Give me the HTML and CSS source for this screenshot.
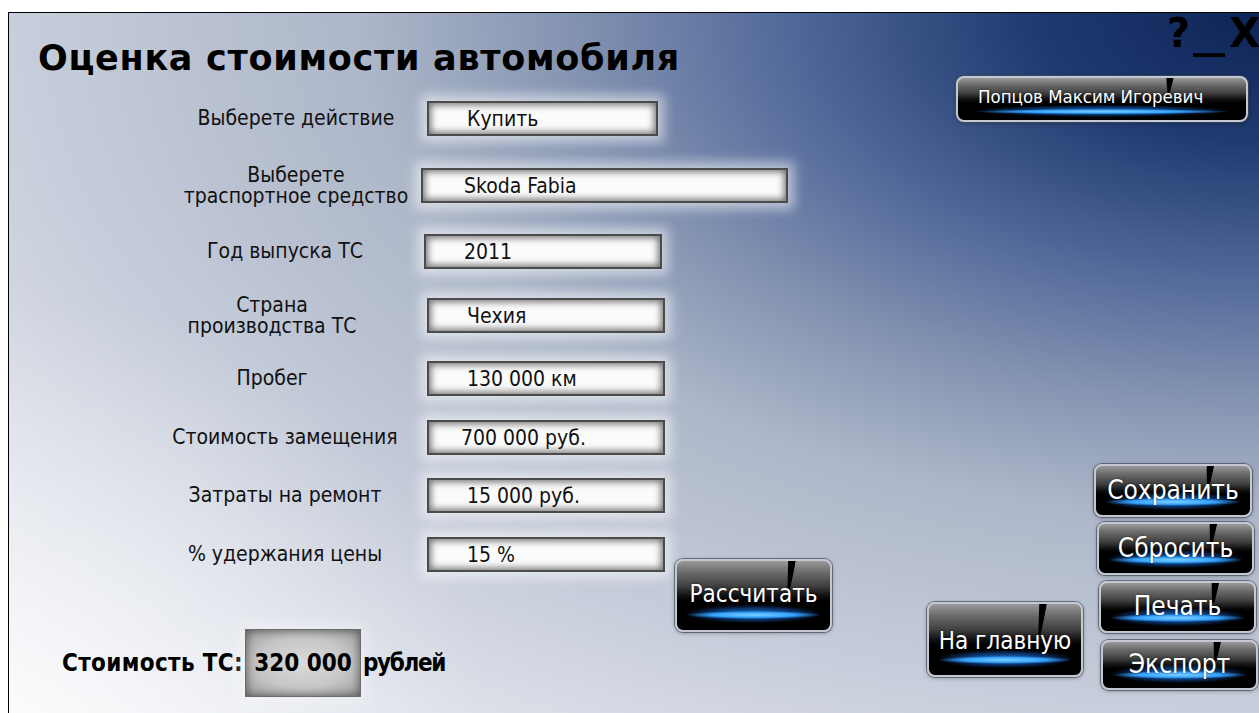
FILE: index.html
```html
<!DOCTYPE html>
<html lang="ru">
<head>
<meta charset="utf-8">
<title>Оценка стоимости автомобиля</title>
<link rel="stylesheet" href="styles.css">
</head>
<body>
<div class="screen">
  <div class="main">
    <h1 class="title">Оценка стоимости автомобиля</h1>

    <div class="form">
      <div class="label label-r">Выберете действие</div>
      <div class="field field-short">Купить</div>
      <div></div>

      <div class="label label-r">Выберете<br>траспортное средство</div>
      <div class="field field-wide">Skoda Fabia</div>
      <div></div>

      <div class="label">Год выпуска ТС</div>
      <div class="field field-year">2011</div>
      <div></div>

      <div class="label label-l">Страна<br>производства ТС</div>
      <div class="field">Чехия</div>
      <div></div>

      <div class="label label-l">Пробег</div>
      <div class="field">130 000 км</div>
      <div></div>

      <div class="label">Стоимость замещения</div>
      <div class="field field-tight">700 000 руб.</div>
      <div></div>

      <div class="label">Затраты на ремонт</div>
      <div class="field">15 000 руб.</div>
      <div></div>

      <div class="label">% удержания цены</div>
      <div class="field">15 %</div>
      <button class="btn btn-calc"><span class="btn-text">Рассчитать</span></button>
    </div>

    <div class="result">
      <span class="result-label">Стоимость ТС:</span>
      <span class="sum-box">320 000</span>
      <span class="result-unit">рублей</span>
    </div>
  </div>

  <div class="side">
    <div class="win-controls">?<span class="wc-min">_</span>X</div>
    <button class="btn btn-user"><span class="btn-text">Попцов Максим Игоревич</span></button>

    <div class="actions">
      <button class="btn btn-home"><span class="btn-text">На главную</span></button>
      <div class="stack">
        <button class="btn btn-side"><span class="btn-text">Сохранить</span></button>
        <button class="btn btn-side"><span class="btn-text">Сбросить</span></button>
        <button class="btn btn-side"><span class="btn-text">Печать</span></button>
        <button class="btn btn-side"><span class="btn-text">Экспорт</span></button>
      </div>
    </div>
  </div>
</div>
</body>
</html>
```

FILE: styles.css
```css
html, body {
  margin: 0;
  padding: 0;
  background: #ffffff;
}

body {
  padding: 12px 0 0 8px;
  font-family: "DejaVu Sans", "Liberation Sans", sans-serif;
}

/* application window */
.screen {
  box-sizing: border-box;
  height: 701px;
  border-top: 1px solid #000;
  border-left: 1px solid #000;
  overflow: hidden;
  display: flex;
  background:
    radial-gradient(ellipse 38% 60% at 0% 100%, rgba(255,255,255,0.55), rgba(255,255,255,0) 100%),
    radial-gradient(ellipse farthest-side at 100% 0%,
      #0f2457 0%, #1f3a70 18%, #52699a 38%, #8695b2 56%,
      #adb7c9 72%, #c8cedb 100%, #e4e7ee 125%, #f6f7f9 141%);
}

/* ---------- left part: title, form, result ---------- */
.main {
  flex: 1;
  display: flex;
  flex-direction: column;
  padding-left: 29px;
}

.title {
  margin: 28px 0 0;
  font-family: "DejaVu Sans", sans-serif;
  font-weight: bold;
  font-size: 35px;
  line-height: 34px;
  letter-spacing: 0.7px;
  color: #000;
  white-space: nowrap;
}

.form {
  margin: 9px 0 0 122px;
  display: grid;
  grid-template-columns: 250px 265px 160px;
  grid-template-rows: 68px 67px 64px 65px 60px 58px 59px 58px;
  align-items: center;
}

.label {
  font-family: "DejaVu Sans Condensed", "DejaVu Sans", sans-serif;
  font-stretch: condensed;
  font-size: 21px;
  line-height: 21px;
  color: #111;
  text-align: center;
  white-space: nowrap;
}

/* a few captions sit a little off the column centre */
.label-r { padding-left: 22px; }
.label-l { padding-right: 26px; }

.field {
  box-sizing: border-box;
  width: 238px;
  height: 35px;
  margin-left: 17px;
  padding-left: 38px;
  border: 2px solid #4b4b4b;
  background: #fbfbfb;
  box-shadow:
    inset 0 0 7px 2px rgba(0,0,0,0.55),
    0 0 11px 6px rgba(255,255,255,0.55);
  font-family: "DejaVu Sans Condensed", "DejaVu Sans", sans-serif;
  font-stretch: condensed;
  font-size: 21px;
  line-height: 33px;
  color: #111;
  white-space: nowrap;
}

.field-short { width: 231px; }
.field-wide { width: 367px; margin-left: 11px; padding-left: 41px; }
.field-year { margin-left: 14px; }
.field-tight { padding-left: 32px; }

/* ---------- glossy black buttons ---------- */
.btn {
  position: relative;
  overflow: hidden;
  box-sizing: border-box;
  padding: 0;
  border: 2px solid #c4c8d0;
  border-radius: 8px;
  background: linear-gradient(to bottom,
    #9a9a9a 0%, #6c6c6c 16%, #404040 36%, #111 50%, #000 58%, #000 100%);
  box-shadow: 0 0 0 1px rgba(70,78,95,0.7), 0 1px 4px rgba(0,0,0,0.35);
  color: #fff;
  font-family: "DejaVu Sans Condensed", "DejaVu Sans", sans-serif;
  font-stretch: condensed;
  font-size: 24px;
  cursor: pointer;
}

/* blue light under the label */
.btn::before {
  content: "";
  position: absolute;
  left: 6%;
  right: 6%;
  bottom: 10%;
  height: 18px;
  background:
    radial-gradient(ellipse 50% 22% at 50% 55%, #7fd0ff 0%, #36a4ff 60%, rgba(30,140,255,0) 100%),
    radial-gradient(ellipse at center, rgba(40,150,255,0.85) 0%, rgba(20,100,210,0.5) 45%, rgba(0,40,120,0) 72%);
}

/* dark reflection seam near the top */
.btn::after {
  content: "";
  position: absolute;
  top: -2px;
  left: 71%;
  width: 8px;
  height: 46%;
  background: #000;
  clip-path: polygon(0 0, 100% 0, 75% 100%, 45% 100%);
  transform: skewX(-8deg);
}

.btn-text {
  position: relative;
  z-index: 1;
  white-space: nowrap;
  text-shadow: 0 0 2px rgba(0,0,0,0.6);
}

.btn-calc {
  align-self: start;
  margin-top: 34px;
  width: 157px;
  height: 73px;
}

.btn-calc .btn-text { top: -2px; }

/* ---------- result line ---------- */
.result {
  margin: 46px 0 0 24px;
  display: flex;
  align-items: center;
  font-family: "DejaVu Sans Condensed", "DejaVu Sans", sans-serif;
  font-stretch: condensed;
  font-weight: bold;
  font-size: 24px;
  color: #000;
}

.result-label { letter-spacing: 0.35px; }
.result-unit { letter-spacing: -1.4px; }

.sum-box {
  box-sizing: border-box;
  height: 68px;
  width: 116px;
  margin: 0 2px 0 2px;
  display: flex;
  align-items: center;
  justify-content: center;
  border: 1px solid #6c6c6c;
  background: radial-gradient(ellipse at center, #dadada 0%, #c6c6c6 55%, #9c9c9c 100%);
  box-shadow:
    inset 0 0 8px 1px rgba(0,0,0,0.45),
    0 0 14px 6px rgba(255,255,255,0.35);
}

/* ---------- right part ---------- */
.side {
  width: 340px;
  display: flex;
  flex-direction: column;
  align-items: flex-end;
  padding-bottom: 23px;
}

.win-controls {
  margin-right: -1px;
  font-family: "DejaVu Sans", sans-serif;
  font-weight: bold;
  font-size: 40px;
  line-height: 40px;
  color: #000;
  white-space: nowrap;
}

.wc-min {
  display: inline-block;
  margin: 0 10px 0 9px;
  transform: scaleX(1.6);
}

.btn-user {
  margin: 23px 11px 0 0;
  width: 292px;
  height: 46px;
  font-size: 18.5px;
  text-align: left;
  padding-left: 20px;
}

.btn-user::after { left: 72%; height: 40%; }
.btn-user::before { bottom: 6%; height: 12px; }
.btn-user .btn-text { top: -3px; }

.actions {
  margin-top: auto;
  display: flex;
  align-items: flex-end;
  gap: 11px;
}

.btn-home {
  width: 156px;
  height: 75px;
  margin-bottom: 13px;
}

.btn-home .btn-text { top: 1px; }

.stack {
  display: flex;
  flex-direction: column;
  align-items: flex-end;
  gap: 5px;
}

.btn-side {
  width: 158px;
  height: 53px;
  font-size: 26px;
}

.btn-side .btn-text { top: -1px; }

.stack .btn-side:nth-child(1) { margin-right: 7px; }
.stack .btn-side:nth-child(2) { margin-right: 5px; width: 157px; }
.stack .btn-side:nth-child(3) { margin-right: 3px; width: 157px; height: 52px; margin-top: 1px; }
.stack .btn-side:nth-child(4) { margin-right: 1px; width: 157px; height: 50px; margin-top: 2px; }
```
